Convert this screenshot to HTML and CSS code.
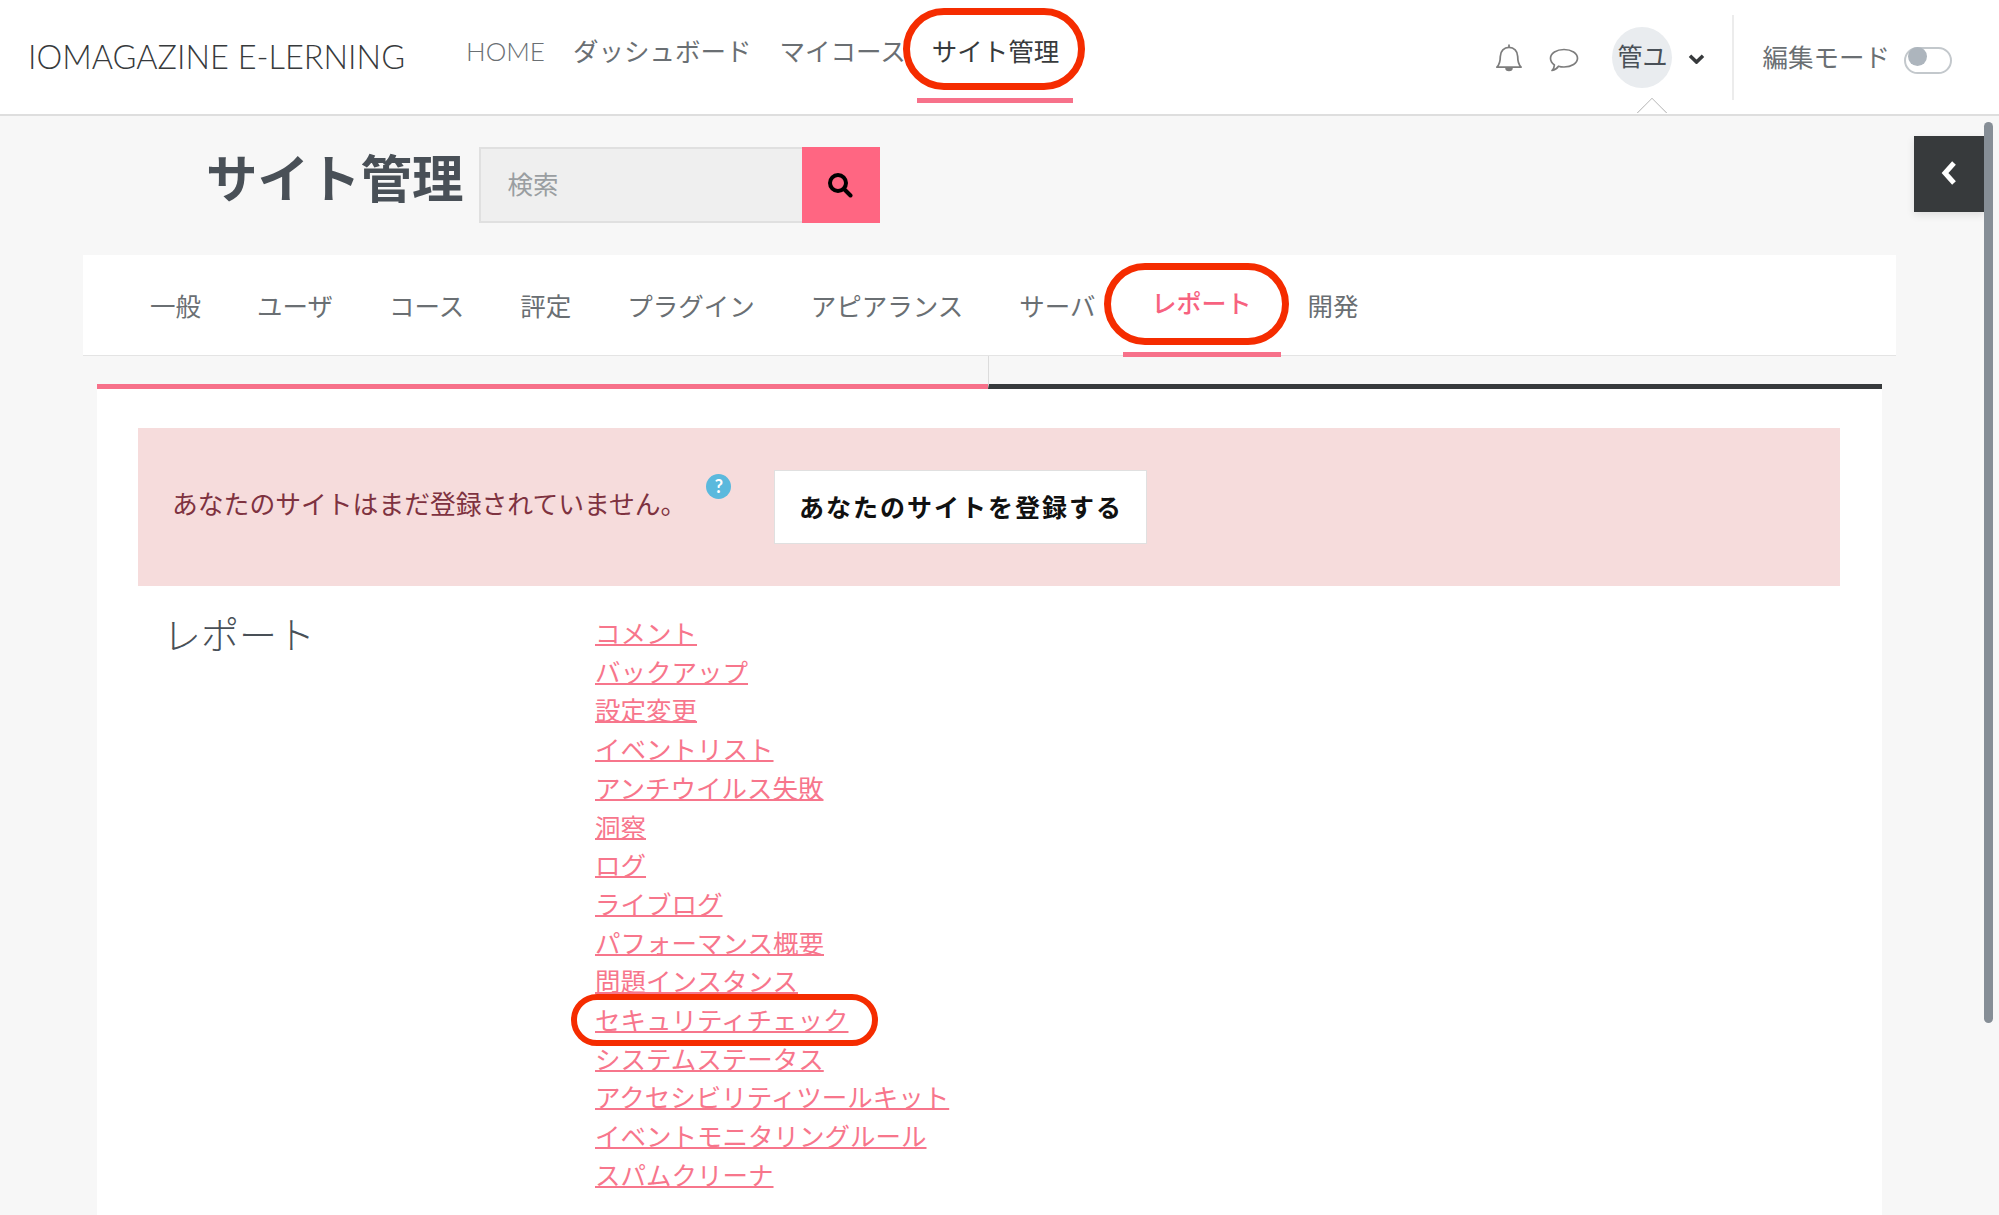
FILE: index.html
```html
<!DOCTYPE html>
<html lang="ja">
<head>
    <meta charset="UTF-8">
    <title>サイト管理</title>
    <link rel="stylesheet" href="styles.css">
</head>
<body>
    <header class="topbar">
        <a class="brand">IOMAGAZINE E-LERNING</a>
        <nav class="topnav">
            <a class="topnav-link">HOME</a>
            <a class="topnav-link">ダッシュボード</a>
            <a class="topnav-link">マイコース</a>
            <a class="topnav-link active">サイト管理</a>
        </nav>
        <div class="usernav">
            <svg class="icon-bell" viewBox="0 0 28 30" fill="none" stroke="#7d7d7d" stroke-width="1.8" stroke-linejoin="round">
                <path d="M14 1.5v3"/>
                <path d="M1.5 25c3-3 3.5-6 3.5-11 0-6 4-9.500 9-9.500s9 3.500 9 9.500c0 5 .5 8 3.500 11z"/>
                <path d="M11 26c0 3 6 3 6 0z" fill="#7d7d7d"/>
            </svg>
            <svg class="icon-chat" viewBox="0 0 30 24" fill="none" stroke="#7d7d7d" stroke-width="1.7" stroke-linejoin="round">
                <path d="M15 1.500c7.500 0 13.500 3.700 13.500 8.800S22.500 19 15 19c-2 0-4-.3-5.500-.8C8 20.500 5.500 22 3 22.500c1.500-1.500 2.300-3.200 2.400-5.500C3 15.300 1.500 13 1.500 10.300 1.500 5.200 7.500 1.500 15 1.500z"/>
            </svg>
            <div class="avatar">管ユ</div>
            <svg class="icon-caret" viewBox="0 0 16 10" fill="none" stroke="#373a3c" stroke-width="3.600">
                <path d="M1.500 1.800L8 8l6.500-6.200"/>
            </svg>
            <span class="pointer"></span>
            <div class="editmode">
                <span>編集モード</span>
                <span class="switch"><span class="switch-knob"></span></span>
            </div>
        </div>
    </header>

    <main class="page">
        <div class="page-head">
            <h1 class="page-title">サイト管理</h1>
            <form class="search">
                <div class="search-input">検索</div>
                <div class="search-btn">
                    <svg viewBox="0 0 26 26" fill="none" stroke="#000" stroke-width="4">
                        <circle cx="11" cy="11" r="8"/>
                        <path d="M17 17l6.500 6.500" stroke-linecap="round"/>
                    </svg>
                </div>
            </form>
        </div>

        <nav class="tabs">
            <a class="tab">一般</a>
            <a class="tab">ユーザ</a>
            <a class="tab">コース</a>
            <a class="tab">評定</a>
            <a class="tab">プラグイン</a>
            <a class="tab">アピアランス</a>
            <a class="tab">サーバ</a>
            <a class="tab active">レポート</a>
            <a class="tab">開発</a>
        </nav>

        <div class="subtabs">
            <div class="subtab current"></div>
            <div class="subtab"></div>
        </div>

        <section class="content">
            <div class="alert">
                <span class="alert-text">あなたのサイトはまだ登録されていません。</span>
                <span class="help">?</span>
                <a class="register-btn">あなたのサイトを登録する</a>
            </div>
            <div class="reports">
                <h2 class="reports-title">レポート</h2>
                <ul class="report-links">
                    <li><a>コメント</a></li>
                    <li><a>バックアップ</a></li>
                    <li><a>設定変更</a></li>
                    <li><a>イベントリスト</a></li>
                    <li><a>アンチウイルス失敗</a></li>
                    <li><a>洞察</a></li>
                    <li><a>ログ</a></li>
                    <li><a>ライブログ</a></li>
                    <li><a>パフォーマンス概要</a></li>
                    <li><a>問題インスタンス</a></li>
                    <li><a class="marked">セキュリティチェック</a></li>
                    <li><a>システムステータス</a></li>
                    <li><a>アクセシビリティツールキット</a></li>
                    <li><a>イベントモニタリングルール</a></li>
                    <li><a>スパムクリーナ</a></li>
                </ul>
            </div>
        </section>
    </main>

    <div class="drawer-toggle">
        <svg viewBox="0 0 18 26" fill="none" stroke="#fff" stroke-width="5">
            <path d="M14 3L5 13l9 10"/>
        </svg>
    </div>
    <div class="scrollbar"></div>
</body>
</html>
```

FILE: styles.css
```css
*, *::after {
    box-sizing: border-box;
}
html, body {
    height: 100%;
}
body {
    margin: 0;
    height: 1215px;
    overflow: hidden;
    position: relative;
    background: #f7f7f7;
    color: #495057;
    font-family: Lato, "Noto Sans CJK JP", sans-serif;
    font-size: 25px;
}

/* top bar */
.topbar {
    height: 116px;
    background: #fff;
    border-bottom: 2px solid #dedede;
    display: flex;
    align-items: flex-start;
    padding-left: 28px;
    position: relative;
}
.brand {
    font-size: 32.500px;
    font-weight: 300;
    line-height: 40px;
    margin-top: 37px;
    color: #373a3c;
    white-space: nowrap;
}
.topnav {
    display: flex;
    gap: 28px;
    margin-left: 61px;
}
.topnav-link {
    padding-top: 31px;
    line-height: 40px;
    height: 103px;
    color: #6a6f73;
    font-size: 25.500px;
    white-space: nowrap;
}
.topnav-link:first-child {
    font-size: 26px;
    font-weight: 300;
}
.topnav-link.active {
    position: relative;
    color: #373a3c;
    padding: 31px 14px 0 15px;
    margin: 0 -14px 0 -17px;
    border-bottom: 5px solid #f7718a;
}
.topnav-link.active::after {
    content: "";
    position: absolute;
    left: -14px;
    right: -12px;
    top: 8px;
    height: 82px;
    border: 7px solid #f52c00;
    border-radius: 41px;
}
.usernav {
    margin-left: auto;
    display: flex;
    align-items: flex-start;
    position: relative;
    padding-right: 47px;
    height: 114px;
}
.icon-bell {
    width: 28px;
    height: 29px;
    margin-top: 43px;
}
.icon-chat {
    width: 30px;
    height: 24px;
    margin: 48px 0 0 26px;
}
.avatar {
    width: 60px;
    height: 61px;
    margin: 27px 0 0 33px;
    border-radius: 50%;
    background: #e9ecef;
    text-align: center;
    line-height: 58px;
    color: #495057;
    font-size: 25px;
    white-space: nowrap;
}
.icon-caret {
    width: 17px;
    height: 10px;
    margin: 54px 27px 0 16px;
}
.pointer {
    position: absolute;
    right: 336px;
    top: 102px;
    width: 22px;
    height: 22px;
    background: #fff;
    border: 1px solid #b4b4b4;
    transform: rotate(45deg);
    clip-path: polygon(0 0, 100% 0, 0 100%);
}
.editmode {
    display: flex;
    align-items: center;
    height: 85px;
    margin-top: 15px;
    border-left: 2px solid #ececec;
    padding-left: 28px;
    gap: 14px;
    color: #6a6f73;
    font-size: 25.500px;
    white-space: nowrap;
}
.editmode span:first-child {
    margin-top: -4px;
}
.switch {
    width: 48px;
    height: 27px;
    margin-top: 6px;
    border: 2px solid #c3c8cc;
    border-radius: 14px;
    background: #fff;
    padding: 2px;
}
.switch-knob {
    display: block;
    width: 19px;
    height: 19px;
    border-radius: 50%;
    background: #adb5bd;
}

/* page head */
.page-head {
    display: flex;
    align-items: flex-start;
    padding: 31px 0 0 206px;
    height: 139px;
}
.page-title {
    margin: 0;
    font-size: 51.500px;
    font-weight: 700;
    line-height: 60px;
    margin-top: 1px;
    color: #495057;
    white-space: nowrap;
}
.search {
    display: flex;
    margin-left: 15px;
    height: 76px;
}
.search-input {
    width: 323px;
    background: #efefef;
    border: 2px solid #e0e0e0;
    border-right: none;
    padding-left: 27px;
    color: #9a9ea1;
    line-height: 70px;
    font-size: 25.500px;
}
.search-btn {
    width: 78px;
    background: #ff6682;
    display: flex;
    align-items: center;
    justify-content: center;
    padding-right: 2px;
}
.search-btn svg {
    width: 26px;
    height: 26px;
}

/* tabs */
.tabs {
    margin: 0 103px 0 83px;
    height: 101px;
    background: #fff;
    border-bottom: 1px solid #e4e4e4;
    display: flex;
    gap: 56px;
    padding-left: 67px;
}
.tab {
    font-size: 25.500px;
    line-height: 40px;
    padding-top: 31px;
    height: 102px;
    color: #6a6f73;
    white-space: nowrap;
}
.tab.active {
    position: relative;
    font-size: 25px;
    font-weight: 500;
    color: #f7627f;
    padding: 28px 29px 0;
    margin: 0 -29px;
    border-bottom: 5px solid #f7718a;
}
.tab.active::after {
    content: "";
    position: absolute;
    left: -19px;
    right: -8px;
    top: 8px;
    height: 82px;
    border: 7px solid #f52c00;
    border-radius: 41px;
}
.subtabs {
    display: flex;
    margin: 0 117px 0 97px;
}
.subtab {
    flex: 1;
    height: 33px;
    border-bottom: 5px solid #373a3c;
    border-left: 1px solid #dcdcdc;
}
.subtab.current {
    flex: none;
    width: 891px;
    border-left: none;
    border-bottom-color: #f7718a;
}

/* content */
.content {
    margin: 0 117px 0 97px;
    height: 826px;
    background: #fff;
    padding: 39px 42px 0 41px;
}
.alert {
    height: 158px;
    background: #f6dcdc;
    display: flex;
    align-items: center;
    padding-left: 34px;
    color: #7e3240;
}
.alert-text {
    font-size: 25.800px;
    margin-top: -10px;
    white-space: nowrap;
}
.help {
    width: 25px;
    height: 25px;
    margin: -42px 0 0 20px;
    border-radius: 50%;
    background: #5bb9dd;
    color: #fff;
    font-size: 18px;
    font-weight: 700;
    line-height: 25px;
    text-align: center;
}
.register-btn {
    width: 373px;
    height: 74px;
    margin-left: 43px;
    background: #fff;
    border: 1px solid #e0e0e0;
    color: #111;
    font-size: 25px;
    font-weight: 700;
    letter-spacing: 2px;
    line-height: 72px;
    text-align: center;
    white-space: nowrap;
}
.reports {
    display: flex;
    margin-top: 28px;
}
.reports-title {
    width: 457px;
    margin: -1px 0 0;
    padding-left: 25px;
    font-size: 38px;
    font-weight: 300;
    line-height: 42px;
    color: #495057;
}
.report-links {
    list-style: none;
    margin: 0;
    padding: 0;
}
.report-links li {
    line-height: 38.700px;
    font-size: 25.500px;
    white-space: nowrap;
}
.report-links a {
    color: #f7768c;
    text-decoration: underline;
    text-decoration-thickness: 2px;
}
.marked {
    position: relative;
}
.marked::after {
    content: "";
    position: absolute;
    left: -24px;
    right: -30px;
    top: -11px;
    height: 52px;
    border: 6.500px solid #f52c00;
    border-radius: 26px;
}

/* right edge */
.drawer-toggle {
    position: absolute;
    left: 1914px;
    top: 136px;
    width: 71px;
    height: 76px;
    padding: 0 2px 2px 0;
    background: #373a3c;
    box-shadow: 0 3px 8px rgba(0, 0, 0, 0.1);
    display: flex;
    align-items: center;
    justify-content: center;
}
.drawer-toggle svg {
    width: 18px;
    height: 26px;
}
.scrollbar {
    position: absolute;
    left: 1984px;
    top: 122px;
    width: 9px;
    height: 901px;
    border-radius: 5px;
    background: #868e96;
}
```
